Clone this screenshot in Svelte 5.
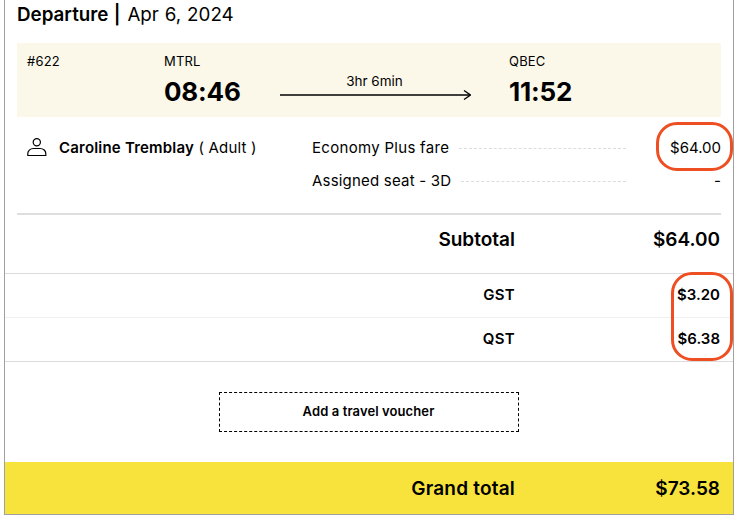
<script lang="ts">
	const taxes = [
		{ label: 'GST', amount: '$3.20' },
		{ label: 'QST', amount: '$6.38' }
	];
</script>

<div class="card">
	<h2 class="title"><strong>Departure |</strong> Apr 6, 2024</h2>

	<div class="trip">
		<span class="num">#622</span>
		<div class="stop">
			<span class="code">MTRL</span>
			<span class="time">08:46</span>
		</div>
		<div class="route">
			<span class="dur">3hr 6min</span>
			<svg width="191" height="10" viewBox="0 0 191 10" fill="none" stroke="#000" stroke-width="1.3">
				<path d="M0 5H190" />
				<path d="M184 0.500L190.500 5L184 9.500" />
			</svg>
		</div>
		<div class="stop">
			<span class="code">QBEC</span>
			<span class="time">11:52</span>
		</div>
	</div>

	<div class="fares">
		<div class="pax">
			<svg width="20" height="20" viewBox="0 0 20 20" fill="none" stroke="#000" stroke-width="1.2">
				<circle cx="9.800" cy="4.200" r="3.600" />
				<path d="M0.800 17.500V15.500C0.800 13 3 10.500 6.500 10.500H13C16.500 10.500 18.800 13 18.800 15.500V17.500Z" />
			</svg>
			<span><strong>Caroline Tremblay</strong> ( Adult )</span>
		</div>
		<div class="lines">
			<div class="line">
				<span class="fare">Economy Plus fare</span>
				<i class="dots"></i>
				<span class="price">$64.00</span>
			</div>
			<div class="line">
				<span>Assigned seat - 3D</span>
				<i class="dots"></i>
				<span class="price">-</span>
			</div>
		</div>
	</div>

	<div class="subtotal">
		<span class="label">Subtotal</span>
		<span class="amount">$64.00</span>
	</div>

	<div class="taxes">
		{#each taxes as tax}
			<div class="tax">
				<span class="label">{tax.label}</span>
				<span class="amount">{tax.amount}</span>
			</div>
		{/each}
	</div>

	<div class="voucher-wrap">
		<button class="voucher">Add a travel voucher</button>
	</div>

	<div class="grand">
		<span class="label">Grand total</span>
		<span class="amount">$73.58</span>
	</div>

	<span class="ring ring-fare"></span>
	<span class="ring ring-tax"></span>
</div>

<style>
	:global(body) {
		background: #fff;
	}

	.card {
		position: relative;
		box-sizing: border-box;
		width: 730px;
		height: 515px;
		margin-left: 4px;
		border: 1px solid #a0a0a0;
		border-top: none;
		font-family: "Inter", "Liberation Sans", sans-serif;
		color: #000;
	}

	strong {
		font-weight: 600;
	}

	.title {
		margin: 0;
		padding: 4px 12px 0;
		height: 40px;
		box-sizing: border-box;
		font-size: 18.800px;
		line-height: 22px;
		font-weight: 400;
		word-spacing: 0.6px;
	}

	.title strong {
		margin-right: 1px;
	}

	.trip {
		display: grid;
		grid-template-columns: 137px 116px 229px 1fr;
		height: 74px;
		margin: 3px 12px 0;
		padding: 10px 0 0 10px;
		box-sizing: border-box;
		background: #fbf8ea;
		font-size: 13px;
	}

	.num,
	.code {
		line-height: 16px;
		letter-spacing: 0.2px;
	}

	.stop {
		display: flex;
		flex-direction: column;
		gap: 7px;
	}

	.time {
		font-size: 26px;
		line-height: 32px;
		font-weight: 700;
		letter-spacing: -0.2px;
	}

	.route {
		display: flex;
		flex-direction: column;
		align-items: center;
		width: 191px;
		padding-top: 20px;
	}

	.route svg {
		display: block;
		margin-top: 1px;
	}

	.dur {
		padding-right: 2px;
		font-size: 13.500px;
		line-height: 16px;
	}

	.fares {
		display: flex;
		height: 98px;
		margin: 0 12px;
		padding-top: 21px;
		box-sizing: border-box;
		border-bottom: 2px solid #dedede;
		font-size: 15px;
		letter-spacing: 0.2px;
	}

	.pax {
		display: flex;
		gap: 12px;
		width: 295px;
		padding-left: 10px;
		box-sizing: border-box;
		line-height: 20px;
	}

	.lines {
		display: flex;
		flex-direction: column;
		flex: 1;
		gap: 13px;
	}

	.line {
		display: flex;
		align-items: center;
		line-height: 20px;
	}

	.fare {
		letter-spacing: 0.3px;
	}

	.dots {
		flex: 1;
		margin-left: 10px;
		border-top: 1px dashed #dcdcdc;
	}

	.price {
		width: 95px;
		text-align: right;
		letter-spacing: 0;
	}

	.subtotal,
	.tax,
	.grand {
		display: grid;
		grid-template-columns: 510px 1fr;
		align-items: center;
		font-weight: 600;
	}

	.label {
		text-align: right;
	}

	.amount {
		text-align: right;
		padding-right: 13px;
	}

	.subtotal {
		height: 59px;
		padding-bottom: 9px;
		box-sizing: border-box;
		font-size: 19px;
		border-bottom: 1px solid #dcdcdc;
	}

	.tax {
		height: 44px;
		padding-bottom: 3px;
		box-sizing: border-box;
		font-size: 15px;
		border-bottom: 1px solid #f0f0f0;
	}

	.tax .label {
		letter-spacing: 0.3px;
	}

	.tax:last-child {
		border-bottom-color: #dcdcdc;
	}

	.voucher-wrap {
		display: flex;
		justify-content: center;
		padding-top: 30px;
		height: 100px;
		box-sizing: border-box;
	}

	.voucher {
		width: 300px;
		height: 40px;
		margin-right: 1px;
		padding: 0 0 2px;
		border: 1px dashed #000;
		background: #fff;
		font: 600 13px "Inter", "Liberation Sans", sans-serif;
		letter-spacing: 0.1px;
		color: #000;
	}

	.grand {
		height: 52px;
		background: #f8e33c;
		font-size: 19px;
	}

	.grand .label {
		letter-spacing: 0.2px;
	}

	.ring {
		position: absolute;
		box-sizing: border-box;
		border: 3px solid #ee4f22;
		border-radius: 21px;
	}

	.ring-fare {
		left: 651px;
		top: 122px;
		width: 77px;
		height: 49px;
	}

	.ring-tax {
		left: 666px;
		top: 272px;
		width: 62px;
		height: 89px;
	}
</style>
